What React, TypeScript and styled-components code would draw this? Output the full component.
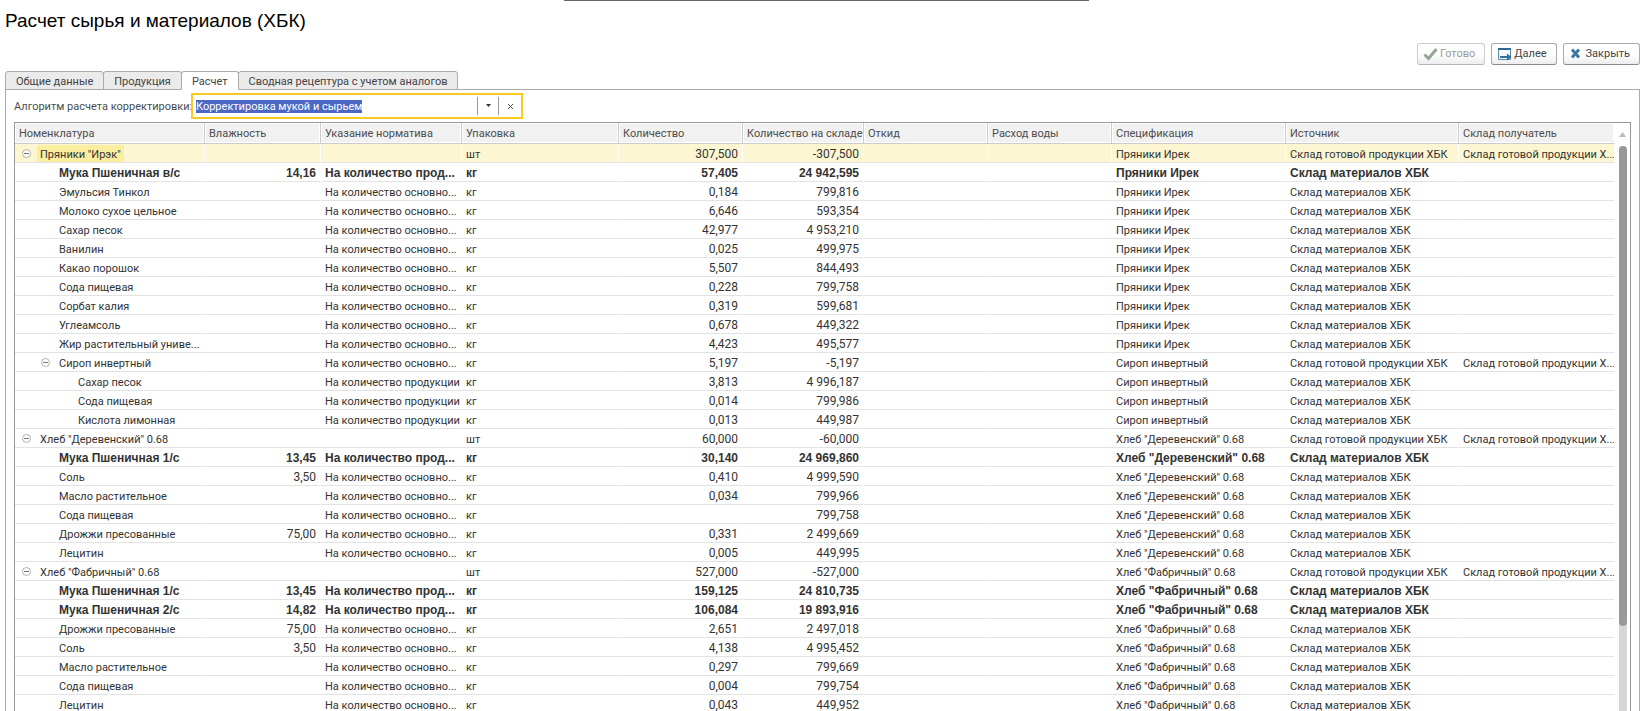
import React from "react";
import styled, { createGlobalStyle, css } from "styled-components";

const Global = createGlobalStyle`
  *, *::before, *::after { box-sizing: border-box; }
  body { margin: 0; background: #fff; color: #333; font: 11px/16px Roboto, "Liberation Sans", sans-serif; overflow: hidden; }
  button, input { font: inherit; color: inherit; margin: 0; padding: 0; border: 0; background: none; }
`;

const Page = styled.main`
  height: 100vh;
  display: flex;
  flex-direction: column;
  padding: 0 7px 0 5px;
  overflow: hidden;
`;
const TopEdge = styled.div`
  flex: none;
  height: 1px;
  margin: 0 33.7% 0 34.2%;
  background: #666;
`;
const Title = styled.h1`
  margin: 0;
  padding: 8px 0 10px;
  font: 400 19px/24px "Liberation Sans", Arial, sans-serif;
  color: #000;
`;
const Toolbar = styled.div`
  display: flex;
  justify-content: flex-end;
  gap: 6px;
  margin-bottom: 6px;
`;
const ToolButton = styled.button`
  height: 22px;
  display: flex;
  align-items: center;
  gap: 2px;
  padding: 0 9px 0 5px;
  border: 1px solid #aaa;
  border-bottom-color: #8a8a8a;
  border-radius: 3px;
  background: linear-gradient(#fff 50%, #ededed);
  color: #444;
  &:disabled { color: #999; border-color: #ccc #ccc #b5b5b5; }
`;
const Tabs = styled.div`
  display: flex;
  height: 19px;
  margin-bottom: -1px;
  position: relative;
`;
const Tab = styled.button<{ $active?: boolean }>`
  height: 19px;
  padding: 2px 10px 0;
  border: 1px solid #aaa;
  border-radius: 3px 3px 0 0;
  background: ${(p) => (p.$active ? "#fff" : "#ebebeb")};
  border-bottom-color: ${(p) => (p.$active ? "#fff" : "#aaa")};
  color: #444;
  white-space: nowrap;
  & + & { margin-left: -1px; }
`;
const Panel = styled.section`
  flex: 1;
  min-height: 0;
  display: flex;
  flex-direction: column;
  padding: 3px 8px 0;
  border: 1px solid #aaa;
  border-bottom: 0;
`;
const Field = styled.div`
  display: flex;
  align-items: center;
  margin-bottom: 3px;
`;
const FieldLabel = styled.label`
  width: 177px;
  padding-top: 1px;
  color: #4d4d4d;
  white-space: nowrap;
`;
const Combo = styled.div`
  display: flex;
  align-items: center;
  width: 332px;
  height: 26px;
  border: 2px solid #fbc91f;
`;
const ComboInput = styled.input`
  flex: 1;
  min-width: 0;
  height: 18px;
  padding: 1px 3px 0;
  outline: none;
  &::selection { background: #4d68c4; color: #fff; }
`;
const ComboButton = styled.button`
  width: 21px;
  height: 18px;
  display: grid;
  place-items: center;
  border-left: 1px solid #999;
  &:last-child { width: 23px; }
`;
const Grid = styled.div`
  flex: 1;
  min-height: 0;
  display: flex;
  border: 1px solid #999;
  border-bottom: 0;
  overflow: hidden;
`;
const TableArea = styled.div`
  flex: 1;
  min-width: 0;
`;
const Table = styled.table`
  width: 100%;
  table-layout: fixed;
  border-collapse: separate;
  border-spacing: 0;
`;
const HeadCell = styled.th`
  height: 21px;
  padding: 2px 0 0 4px;
  border-right: 1px solid #ccc;
  border-bottom: 1px solid #ccc;
  background: #f1f1f1;
  box-shadow: inset 0 0 0 1px #fff;
  color: #4d4d4d;
  font-weight: 400;
  text-align: left;
  white-space: nowrap;
  &:last-child { border-right-color: #fff; }
`;
const Cell = styled.td<{ $number?: boolean; $bold?: boolean }>`
  height: 19px;
  padding: ${(p) => (p.$number || p.$bold ? 3 : 4)}px ${(p) => (p.$number ? 4 : 0)}px 0 4px;
  border-right: 1px solid #fff;
  border-bottom: 1px solid #e3e3e3;
  background-clip: padding-box;
  line-height: 14px;
  vertical-align: top;
  white-space: nowrap;
  overflow: hidden;
  ${(p) => p.$number && css`font-size: 12px; text-align: right;`}
`;
const Row = styled.tr<{ $bold?: boolean; $current?: boolean }>`
  background: ${(p) => (p.$current ? "#fdf6d2" : "#fff")};
  ${(p) => p.$bold && css`font: 700 12px/14px "Liberation Sans", Arial, sans-serif;`}
`;
const NameCell = styled(Cell)<{ $level: number }>`
  padding: 1px 0 0 ${(p) => 4 + p.$level * 19}px;
`;
const NameLine = styled.div`
  display: flex;
  align-items: center;
`;
const Toggle = styled.button`
  flex: none;
  width: 15px;
  height: 17px;
  margin-right: 3px;
  display: grid;
  place-items: center;
`;
const Name = styled.span<{ $current?: boolean; $leaf?: boolean; $bold?: boolean }>`
  padding: ${(p) => (p.$bold ? 2 : 3)}px 3px 0;
  margin-left: ${(p) => (p.$leaf ? "18px" : "0")};
  ${(p) => p.$current && css`background: #fcee9f;`}
`;
const Scroll = styled.div`
  width: 15px;
  display: flex;
  flex-direction: column;
  align-items: center;
`;
const ScrollUp = styled.button`
  height: 23px;
  width: 15px;
  display: grid;
  place-items: center;
`;
const Track = styled.div`
  flex: 1;
  width: 8px;
  border-radius: 4px 4px 0 0;
  background: #d6d6d6;
`;
const Thumb = styled.div`
  height: 85%;
  border-radius: 4px;
  background: #999;
`;

const columns: [string, number][] = [
  ["Номенклатура", 190], ["Влажность", 116], ["Указание норматива", 141], ["Упаковка", 157],
  ["Количество", 124], ["Количество на складе", 121], ["Откид", 124], ["Расход воды", 124],
  ["Спецификация", 174], ["Источник", 173], ["Склад получатель", 156],
];

type Item = {
  level: number; name: string; hum: string; norm: string; unit: string;
  qty: string; stock: string; spec: string; group?: boolean; bold?: boolean;
};
const MAIN = "На количество основно...";
const PROD = "На количество продукции";
const PROD_SHORT = "На количество прод...";
const group = (level: number, name: string, norm: string, unit: string, qty: string, stock: string, spec: string): Item =>
  ({ level, name, hum: "", norm, unit, qty, stock, spec, group: true });
const leaf = (level: number, name: string, hum: string, qty: string, stock: string, spec: string, norm = MAIN): Item =>
  ({ level, name, hum, norm, unit: "кг", qty, stock, spec });
const flour = (name: string, hum: string, qty: string, stock: string, spec: string): Item =>
  ({ level: 1, name, hum, norm: PROD_SHORT, unit: "кг", qty, stock, spec, bold: true });

const P = "Пряники Ирек";
const S = "Сироп инвертный";
const D = 'Хлеб "Деревенский" 0.68';
const F = 'Хлеб "Фабричный" 0.68';

const items: Item[] = [
  group(0, 'Пряники "Ирэк"', "", "шт", "307,500", "-307,500", P),
  flour("Мука Пшеничная в/с", "14,16", "57,405", "24 942,595", P),
  leaf(1, "Эмульсия Тинкол", "", "0,184", "799,816", P),
  leaf(1, "Молоко сухое цельное", "", "6,646", "593,354", P),
  leaf(1, "Сахар песок", "", "42,977", "4 953,210", P),
  leaf(1, "Ванилин", "", "0,025", "499,975", P),
  leaf(1, "Какао порошок", "", "5,507", "844,493", P),
  leaf(1, "Сода пищевая", "", "0,228", "799,758", P),
  leaf(1, "Сорбат калия", "", "0,319", "599,681", P),
  leaf(1, "Углеамсоль", "", "0,678", "449,322", P),
  leaf(1, "Жир растительный униве...", "", "4,423", "495,577", P),
  group(1, "Сироп инвертный", MAIN, "кг", "5,197", "-5,197", S),
  leaf(2, "Сахар песок", "", "3,813", "4 996,187", S, PROD),
  leaf(2, "Сода пищевая", "", "0,014", "799,986", S, PROD),
  leaf(2, "Кислота лимонная", "", "0,013", "449,987", S, PROD),
  group(0, D, "", "шт", "60,000", "-60,000", D),
  flour("Мука Пшеничная 1/с", "13,45", "30,140", "24 969,860", D),
  leaf(1, "Соль", "3,50", "0,410", "4 999,590", D),
  leaf(1, "Масло растительное", "", "0,034", "799,966", D),
  leaf(1, "Сода пищевая", "", "", "799,758", D),
  leaf(1, "Дрожжи пресованные", "75,00", "0,331", "2 499,669", D),
  leaf(1, "Лецитин", "", "0,005", "449,995", D),
  group(0, F, "", "шт", "527,000", "-527,000", F),
  flour("Мука Пшеничная 1/с", "13,45", "159,125", "24 810,735", F),
  flour("Мука Пшеничная 2/с", "14,82", "106,084", "19 893,916", F),
  leaf(1, "Дрожжи пресованные", "75,00", "2,651", "2 497,018", F),
  leaf(1, "Соль", "3,50", "4,138", "4 995,452", F),
  leaf(1, "Масло растительное", "", "0,297", "799,669", F),
  leaf(1, "Сода пищевая", "", "0,004", "799,754", F),
  leaf(1, "Лецитин", "", "0,043", "449,952", F),
];

const CheckIcon = () => (
  <svg width="15" height="14" viewBox="0 0 15 14" aria-hidden="true">
    <path d="M1.500 7.500 5.500 11.500 13.500 2" fill="none" stroke="#93a893" strokeWidth="3" />
  </svg>
);
const NextIcon = () => (
  <svg width="15" height="14" viewBox="0 0 15 14" aria-hidden="true">
    <path d="M1.500 1.500h12v11h-12z" fill="#f4f8fb" stroke="#5d89a8" />
    <path d="M1 1h13v2H1z" fill="#2f6a94" />
    <path d="M3 9h7V6.500l4.500 3.500-4.500 3.500V11H3z" fill="#2f7099" />
  </svg>
);
const CrossIcon = () => (
  <svg width="15" height="14" viewBox="0 0 15 14" aria-hidden="true">
    <path d="m3 2.500 7 8M10 2.500l-7 8" stroke="#3a7ca6" strokeWidth="3" />
  </svg>
);

export default function App() {
  const input = React.useRef<HTMLInputElement>(null);
  React.useEffect(() => {
    input.current?.focus();
    input.current?.select();
  }, []);
  return (
    <Page>
      <Global />
      <TopEdge />
      <Title>Расчет сырья и материалов (ХБК)</Title>
      <Toolbar>
        <ToolButton disabled><CheckIcon />Готово</ToolButton>
        <ToolButton><NextIcon />Далее</ToolButton>
        <ToolButton><CrossIcon />Закрыть</ToolButton>
      </Toolbar>
      <Tabs role="tablist">
        <Tab role="tab">Общие данные</Tab>
        <Tab role="tab">Продукция</Tab>
        <Tab role="tab" aria-selected="true" $active>Расчет</Tab>
        <Tab role="tab">Сводная рецептура с учетом аналогов</Tab>
      </Tabs>
      <Panel>
        <Field>
          <FieldLabel htmlFor="algorithm">Алгоритм расчета корректировки:</FieldLabel>
          <Combo>
            <ComboInput id="algorithm" ref={input} defaultValue="Корректировка мукой и сырьем" />
            <ComboButton aria-label="Выбрать">
              <svg width="7" height="4"><path d="M1 0h5L3.500 3z" fill="#333" /></svg>
            </ComboButton>
            <ComboButton aria-label="Очистить">
              <svg width="7" height="7"><path d="m1 1 5 5M6 1 1 6" stroke="#555" /></svg>
            </ComboButton>
          </Combo>
        </Field>
        <Grid>
          <TableArea>
            <Table>
              <colgroup>{columns.map(([label, w]) => <col key={label} width={w} />)}</colgroup>
              <thead>
                <tr>{columns.map(([label]) => <HeadCell key={label}>{label}</HeadCell>)}</tr>
              </thead>
              <tbody>
                {items.map((r, i) => {
                  const current = i === 0;
                  return (
                    <Row key={i} $bold={r.bold} $current={current}>
                      <NameCell $level={r.level}>
                        <NameLine>
                          {r.group && (
                            <Toggle aria-label="Свернуть">
                              <svg width="9" height="9" viewBox="0 0 9 9">
                                <circle cx="4.500" cy="4.500" r="4" fill="#fff" stroke="#b5b0a8" />
                                <path d="M2 4.500h5" stroke="#777" />
                              </svg>
                            </Toggle>
                          )}
                          <Name $current={current} $leaf={!r.group} $bold={r.bold}>{r.name}</Name>
                        </NameLine>
                      </NameCell>
                      <Cell $number>{r.hum}</Cell>
                      <Cell $bold={r.bold}>{r.norm}</Cell>
                      <Cell $bold={r.bold}>{r.unit}</Cell>
                      <Cell $number>{r.qty}</Cell>
                      <Cell $number>{r.stock}</Cell>
                      <Cell />
                      <Cell />
                      <Cell $bold={r.bold}>{r.spec}</Cell>
                      <Cell $bold={r.bold}>{r.group ? "Склад готовой продукции ХБК" : "Склад материалов ХБК"}</Cell>
                      <Cell>{r.group ? "Склад готовой продукции Х..." : ""}</Cell>
                    </Row>
                  );
                })}
              </tbody>
            </Table>
          </TableArea>
          <Scroll>
            <ScrollUp aria-label="Вверх">
              <svg width="7" height="5"><path d="M3.500 0 7 5H0z" fill="#bbb" /></svg>
            </ScrollUp>
            <Track><Thumb /></Track>
          </Scroll>
        </Grid>
      </Panel>
    </Page>
  );
}
